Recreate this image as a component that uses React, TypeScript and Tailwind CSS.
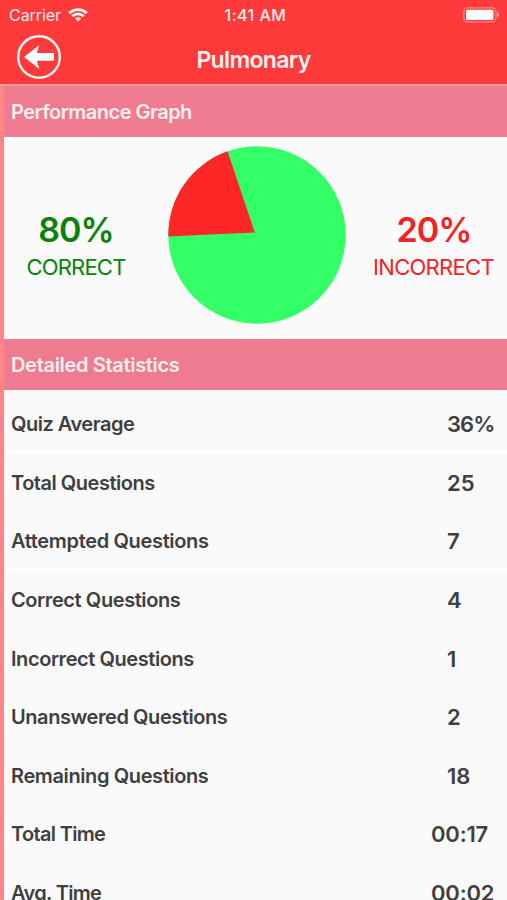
const stats = [
  { label: 'Quiz Average', value: '36%', spacing: 'tracking-[-0.5px]', divider: true },
  { label: 'Total Questions', value: '25', spacing: 'tracking-[-0.48px]' },
  { label: 'Attempted Questions', value: '7', spacing: 'tracking-[-0.34px]', divider: true },
  { label: 'Correct Questions', value: '4', spacing: 'tracking-[-0.41px]' },
  { label: 'Incorrect Questions', value: '1', spacing: 'tracking-[-0.43px]' },
  { label: 'Unanswered Questions', value: '2', spacing: 'tracking-[-0.43px]' },
  { label: 'Remaining Questions', value: '18', spacing: 'tracking-[-0.39px]' },
  { label: 'Total Time', value: '00:17', wide: true, spacing: 'tracking-[-0.68px]' },
  { label: 'Avg. Time', value: '00:02', wide: true, spacing: 'tracking-[-0.68px]' },
];

function WifiIcon() {
  return (
    <svg width="20" height="14" viewBox="0 0 20 14" fill="none" stroke="#fff0ee">
      <path d="M1.2 5.1C6.3.4 13.7.4 18.8 5.1" strokeWidth="2.9" />
      <path d="M4.3 8.2C7.6 5.1 12.4 5.1 15.7 8.2" strokeWidth="2.7" />
      <path d="M10 13.6 6.9 10.5C8.7 8.9 11.3 8.9 13.1 10.5Z" fill="#fff0ee" stroke="none" />
    </svg>
  );
}

function BatteryIcon() {
  return (
    <svg width="37" height="16" viewBox="0 0 37 16">
      <rect x="0.9" y="0.9" width="32" height="14" rx="3.6" fill="none" stroke="#ff8585" strokeWidth="1.4" />
      <rect x="3" y="2.8" width="27.5" height="10.2" rx="1.5" fill="#fff" />
      <path d="M34.1 5.1C36.7 6 36.7 9.6 34.1 10.5Z" fill="#ff9c9c" />
    </svg>
  );
}

function BackIcon() {
  return (
    <svg width="44" height="44" viewBox="0 0 44 44">
      <circle cx="22" cy="22" r="20.8" fill="none" stroke="#fff3f2" strokeWidth="2.4" />
      <path d="M7 22 22.3 10 19.8 18H37V25.8H19.8L22.3 34Z" fill="#fff" />
    </svg>
  );
}

function PieChart() {
  return (
    <svg width="178" height="178" viewBox="0 0 178 178">
      <circle cx="89" cy="89" r="88.7" fill="#33ff66" />
      <path d="M86.8 86.5 59.6 5.3A88.7 88.7 0 0 0 .3 90.5Z" fill="#ff2627" />
    </svg>
  );
}

function SectionHeader({ title, spacing }: { title: string; spacing: string }) {
  return (
    <h2 className={`flex h-[51px] shrink-0 items-center bg-[#ef7b91] pl-[7px] text-[20px] leading-6 font-semibold text-[#fff0ee] ${spacing}`}>
      {title}
    </h2>
  );
}

export default function App() {
  return (
    <div className="flex h-[900px] w-[507px] flex-col overflow-hidden bg-[#fafafa] font-['Inter',sans-serif] text-[#3f3f3f]">
      <header className="flex h-[84px] shrink-0 flex-col bg-[#ff3a3b]">
        <div className="grid h-[30px] grid-cols-[1fr_auto_1fr] items-center pr-[7px] pl-[9px] text-[16px] leading-5 text-[#ffeeed]">
          <div className="flex items-center gap-[7px]">
            <span className="tracking-[-0.05px]">Carrier</span>
            <WifiIcon />
          </div>
          <span className="pl-[2px] font-medium tracking-[0.5px]">1:41 AM</span>
          <div className="flex justify-end">
            <BatteryIcon />
          </div>
        </div>
        <div className="grid h-[54px] grid-cols-[1fr_auto_1fr] items-center px-[17px]">
          <button className="-mt-px w-fit" aria-label="Back">
            <BackIcon />
          </button>
          <h1 className="pt-[6px] text-[23px] leading-7 font-semibold tracking-[-0.65px] text-[#fff0ee]">Pulmonary</h1>
        </div>
      </header>
      <div className="h-[2px] shrink-0 bg-[#ff999b]" />
      <main className="flex min-h-0 flex-1 flex-col border-l-4 border-[#fe8587]">
        <SectionHeader title="Performance Graph" spacing="tracking-[-0.52px]" />
        <section className="flex h-[202px] shrink-0 pt-[9px]">
          <div className="flex w-[164px] flex-col items-center pt-[64px] pr-[20px] text-[#078307]">
            <span className="text-[34px] leading-10 font-semibold tracking-[-0.9px]">80%</span>
            <span className="-mt-px text-[22px] leading-9 tracking-[-0.8px]">CORRECT</span>
          </div>
          <PieChart />
          <div className="flex w-[161px] flex-col items-center pt-[64px] pl-[14px] text-[#f52225]">
            <span className="pl-px text-[34px] leading-10 font-semibold tracking-[-1px]">20%</span>
            <span className="-mt-px text-[22px] leading-9 tracking-[-0.7px]">INCORRECT</span>
          </div>
        </section>
        <SectionHeader title="Detailed Statistics" spacing="tracking-[-0.32px]" />
        <dl className="flex flex-col pt-[5px]">
          {stats.map((row) => (
            <div
              key={row.label}
              className={`flex h-[58.6px] shrink-0 items-center justify-between border-y-[3px] border-t-transparent pl-[7px] font-semibold ${row.divider ? 'border-b-white' : 'border-b-transparent'}`}
            >
              <dt className={`text-[20px] leading-6 ${row.spacing}`}>{row.label}</dt>
              <dd className={`text-[22px] leading-6 ${row.wide ? 'w-[76px] tracking-[-0.2px]' : 'w-[60px]'} ${row.value === '36%' ? 'tracking-[-0.9px]' : ''}`}>
                {row.value}
              </dd>
            </div>
          ))}
        </dl>
      </main>
    </div>
  );
}
